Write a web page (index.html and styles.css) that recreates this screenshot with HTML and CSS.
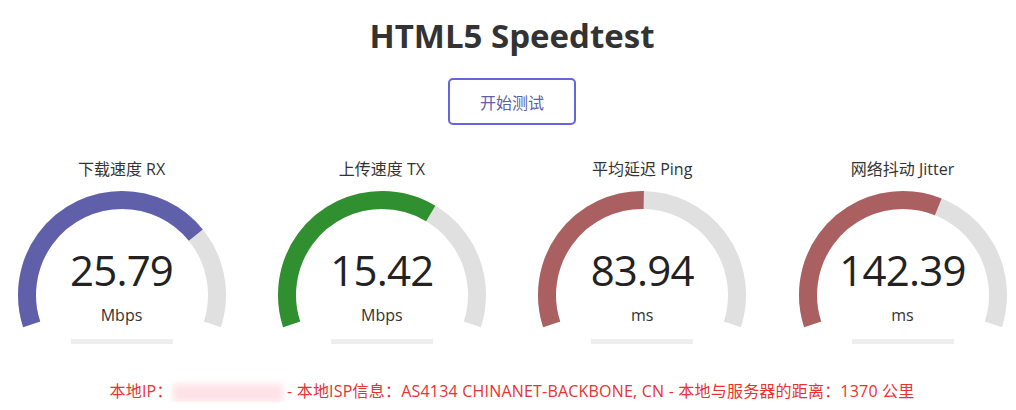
FILE: index.html
```html
<!DOCTYPE html>
<html>
<head>
    <title>HTML5 Speedtest</title>
    <meta name="viewport" content="width=device-width, initial-scale=1.0">
    <link rel="stylesheet" href="styles.css">
</head>
<body>
    <h1>HTML5 Speedtest</h1>

    <div class="start">
        <button class="start-btn">开始测试</button>
    </div>

    <div class="test-group">
        <div class="test-area">
            <div class="test-name">下载速度 RX</div>
            <div class="meter">
                <svg width="230" height="150" viewBox="0 0 230 150">
                    <path class="meter-bk" d="M24.65 145.36 A95 95 0 1 1 205.35 145.36" pathLength="100"/>
                    <path class="meter-fill dl" d="M24.65 145.36 A95 95 0 1 1 205.35 145.36" pathLength="100" stroke-dasharray="73.6 200"/>
                </svg>
                <div class="meter-value">25.79</div>
                <div class="meter-unit">Mbps</div>
            </div>
            <div class="meter-bar"></div>
        </div>

        <div class="test-area">
            <div class="test-name">上传速度 TX</div>
            <div class="meter">
                <svg width="230" height="150" viewBox="0 0 230 150">
                    <path class="meter-bk" d="M24.65 145.36 A95 95 0 1 1 205.35 145.36" pathLength="100"/>
                    <path class="meter-fill ul" d="M24.65 145.36 A95 95 0 1 1 205.35 145.36" pathLength="100" stroke-dasharray="64.3 200"/>
                </svg>
                <div class="meter-value">15.42</div>
                <div class="meter-unit">Mbps</div>
            </div>
            <div class="meter-bar"></div>
        </div>

        <div class="test-area">
            <div class="test-name">平均延迟 Ping</div>
            <div class="meter">
                <svg width="230" height="150" viewBox="0 0 230 150">
                    <path class="meter-bk" d="M24.65 145.36 A95 95 0 1 1 205.35 145.36" pathLength="100"/>
                    <path class="meter-fill ping" d="M24.65 145.36 A95 95 0 1 1 205.35 145.36" pathLength="100" stroke-dasharray="50.5 200"/>
                </svg>
                <div class="meter-value">83.94</div>
                <div class="meter-unit">ms</div>
            </div>
            <div class="meter-bar"></div>
        </div>

        <div class="test-area">
            <div class="test-name">网络抖动 Jitter</div>
            <div class="meter">
                <svg width="230" height="150" viewBox="0 0 230 150">
                    <path class="meter-bk" d="M24.65 145.36 A95 95 0 1 1 205.35 145.36" pathLength="100"/>
                    <path class="meter-fill ping" d="M24.65 145.36 A95 95 0 1 1 205.35 145.36" pathLength="100" stroke-dasharray="60.1 200"/>
                </svg>
                <div class="meter-value">142.39</div>
                <div class="meter-unit">ms</div>
            </div>
            <div class="meter-bar"></div>
        </div>
    </div>

    <div class="ip-info">
        本地IP：<span class="ip-blur"></span> - 本地ISP信息：AS4134 CHINANET-BACKBONE, CN - 本地与服务器的距离：1370 公里
    </div>
</body>
</html>
```

FILE: styles.css
```css
body {
    margin: 0;
    padding: 0 0 0 8px;
    background-color: #ffffff;
    font-family: "Open Sans", "Noto Sans CJK SC", sans-serif;
    color: #333333;
}

h1 {
    margin: 0;
    padding-top: 16px;
    font-size: 33px;
    line-height: 40px;
    font-weight: bold;
    text-align: center;
    color: #333333;
}

.start {
    display: flex;
    justify-content: center;
    margin-top: 22px;
}

.start-btn {
    width: 128px;
    height: 47px;
    background-color: #ffffff;
    border: 2px solid #6464e0; /* blue-purple outline */
    border-radius: 5px;
    color: #6060aa;
    font-family: "Open Sans", "Noto Sans CJK SC", sans-serif;
    font-size: 16px;
    cursor: pointer;
}

.start-btn:hover {
    background-color: #f4f4ff;
}

/* Four gauges in a row */
.test-group {
    display: flex;
    justify-content: center;
    gap: 30.33px;
    margin-top: 34px;
}

.test-area {
    width: 230px;
    flex: none;
}

.test-name {
    font-size: 16px;
    line-height: 20px;
    text-align: center;
    color: #333333;
}

.meter {
    position: relative;
    width: 230px;
    height: 150px;
}

.meter svg {
    display: block;
}

.meter-bk,
.meter-fill {
    fill: none;
    stroke-width: 18;
    stroke-linecap: butt;
}

.meter-bk {
    stroke: #e0e0e0;
}

.meter-fill.dl {
    stroke: #6060aa;
}

.meter-fill.ul {
    stroke: #309030;
}

.meter-fill.ping {
    stroke: #aa6060;
}

.meter-value {
    position: absolute;
    left: 0;
    right: 0;
    top: 66px;
    font-size: 42px;
    line-height: 50px;
    letter-spacing: -0.8px;
    text-align: center;
    color: #222222;
}

.meter-unit {
    position: absolute;
    left: 0;
    right: 0;
    top: 126px;
    font-size: 16px;
    line-height: 20px;
    text-align: center;
    color: #333333;
}

.meter-bar {
    width: 102px;
    height: 5px;
    margin: 10px auto 0;
    background-color: #eeeeee;
}

/* Client info line */
.ip-info {
    margin-top: 36px;
    font-size: 16px;
    line-height: 22px;
    letter-spacing: 0.2px;
    text-align: center;
    color: #e83232;
}

.ip-blur {
    display: inline-block;
    width: 110px;
    height: 18px;
    vertical-align: middle;
    background-color: #fde2e6;
    filter: blur(3px);
}
```
